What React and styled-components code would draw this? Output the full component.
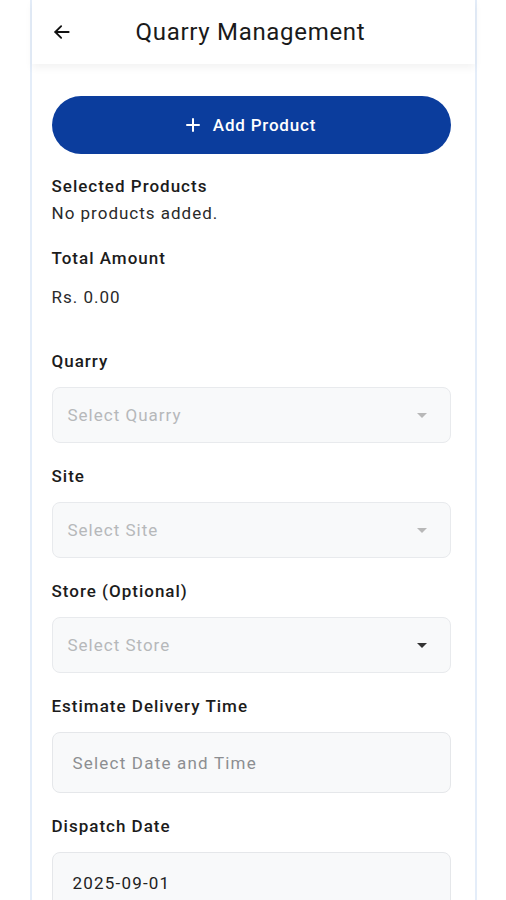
import React from 'react';
import styled, { createGlobalStyle } from 'styled-components';

const GlobalStyle = createGlobalStyle`
  html, body {
    margin: 0;
    padding: 0;
    background: #ffffff;
    font-family: Roboto, "Noto Sans", "Liberation Sans", sans-serif;
    color: #1c1c1c;
  }
  * { box-sizing: border-box; }
`;

const Frame = styled.div`
  width: 447px;
  margin: 0 auto;
  min-height: 900px;
  border-left: 2px solid #e4edf9;
  border-right: 2px solid #e4edf9;
  background: #ffffff;
`;

const Header = styled.header`
  height: 64px;
  display: flex;
  align-items: center;
  padding-left: 20px;
  background: #ffffff;
  box-shadow: 0 4px 8px rgba(0, 0, 0, 0.05);
  position: relative;
`;

const BackButton = styled.button`
  width: 20px;
  height: 20px;
  padding: 0;
  border: none;
  background: none;
  display: flex;
  align-items: center;
  justify-content: center;
  color: #111;
`;

const Title = styled.h1`
  margin: 0 0 0 64px;
  font-size: 24px;
  font-weight: 400;
  color: #1a1a1a;
  letter-spacing: 0.7px;
`;

const Content = styled.main`
  padding: 32px 24px 0 20px;
`;

const AddButton = styled.button`
  width: 100%;
  height: 58px;
  border: none;
  border-radius: 29px;
  background: #0b3d9d;
  color: #ffffff;
  font-family: inherit;
  font-size: 17px;
  font-weight: 500;
  letter-spacing: 0.8px;
  display: flex;
  align-items: center;
  justify-content: center;
  gap: 13px;
`;

const Block = styled.section`
  margin-top: ${p => p.$top}px;
  display: flex;
  flex-direction: column;
  gap: ${p => p.$gap || 0}px;
`;

const Heading = styled.div`
  font-size: 17px;
  line-height: 24px;
  font-weight: 500;
  letter-spacing: 1px;
  color: #1c1c1c;
`;

const Text = styled.div`
  font-size: 17px;
  line-height: 24px;
  letter-spacing: 1px;
  color: #2a2a2a;
`;

const Fields = styled.div`
  margin-top: 40px;
  display: flex;
  flex-direction: column;
  gap: 21px;
`;

const Field = styled.div`
  display: flex;
  flex-direction: column;
  gap: 14px;
`;

const Select = styled.div`
  height: 56px;
  border: 1px solid #e8eaed;
  border-radius: 8px;
  background: #f8f9fa;
  display: flex;
  align-items: center;
  justify-content: space-between;
  padding: 0 23px 0 15px;
  font-size: 17px;
  letter-spacing: 1px;
  color: #b6b8ba;
`;

const Caret = styled.span`
  width: 0;
  height: 0;
  border-left: 5px solid transparent;
  border-right: 5px solid transparent;
  border-top: 5px solid ${p => (p.$dark ? '#333' : '#b8b8b8')};
`;

const Input = styled.div`
  height: 61px;
  border: 1px solid #e5e7ea;
  border-radius: 8px;
  background: #f8f9fa;
  display: flex;
  align-items: center;
  padding: 0 20px;
  font-size: 17px;
  letter-spacing: 1.2px;
  color: ${p => (p.$filled ? '#222' : '#8c8e91')};
`;

const ArrowLeft = () => (
  <svg width="20" height="20" viewBox="0 0 24 24" fill="none" stroke="currentColor" strokeWidth="2.2" strokeLinecap="round" strokeLinejoin="round">
    <path d="M20 12H4" />
    <path d="M11 5l-7 7 7 7" />
  </svg>
);

const Plus = () => (
  <svg width="14" height="14" viewBox="0 0 14 14" stroke="currentColor" strokeWidth="2" strokeLinecap="round">
    <path d="M7 1v12M1 7h12" />
  </svg>
);

const selects = [
  { label: 'Quarry', placeholder: 'Select Quarry' },
  { label: 'Site', placeholder: 'Select Site' },
  { label: 'Store (Optional)', placeholder: 'Select Store', dark: true },
];

export default function App() {
  return (
    <>
      <GlobalStyle />
      <Frame>
        <Header>
          <BackButton aria-label="Back">
            <ArrowLeft />
          </BackButton>
          <Title>Quarry Management</Title>
        </Header>
        <Content>
          <AddButton>
            <Plus />
            Add Product
          </AddButton>

          <Block $top={20} $gap={3}>
            <Heading>Selected Products</Heading>
            <Text>No products added.</Text>
          </Block>

          <Block $top={21} $gap={15}>
            <Heading>Total Amount</Heading>
            <Text>Rs. 0.00</Text>
          </Block>

          <Fields>
            {selects.map(s => (
              <Field key={s.label}>
                <Heading>{s.label}</Heading>
                <Select>
                  {s.placeholder}
                  <Caret $dark={s.dark} />
                </Select>
              </Field>
            ))}
            <Field>
              <Heading>Estimate Delivery Time</Heading>
              <Input>Select Date and Time</Input>
            </Field>
            <Field>
              <Heading>Dispatch Date</Heading>
              <Input $filled>2025-09-01</Input>
            </Field>
          </Fields>
        </Content>
      </Frame>
    </>
  );
}
